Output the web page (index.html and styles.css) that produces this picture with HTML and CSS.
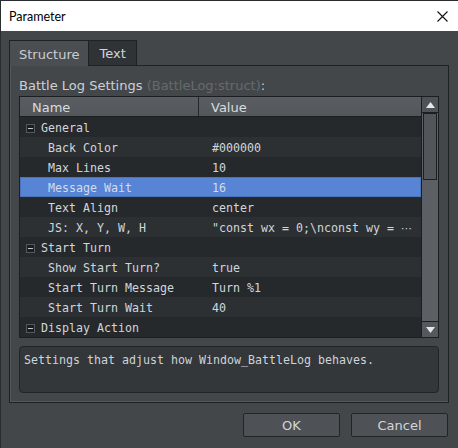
FILE: index.html
```html
<!DOCTYPE html>
<html>
<head>
<meta charset="utf-8">
<title>Parameter</title>
<link rel="stylesheet" href="styles.css">
</head>
<body>
<div class="window">
  <div class="titlebar">
    <span class="title">Parameter</span>
    <svg class="close" width="11" height="11" viewBox="0 0 11 11"><path d="M0.5 0.5L10.5 10.5M10.5 0.5L0.5 10.5" stroke="#111" stroke-width="1.1" fill="none"/></svg>
  </div>
  <div class="body">
    <div class="tabs">
      <div class="tab active">Structure</div>
      <div class="tab">Text</div>
    </div>
    <div class="pane">
      <div class="label">Battle Log Settings <span class="type">(BattleLog:struct)</span>:</div>
      <div class="tree">
        <div class="tree-main">
          <div class="header">
            <div class="head-name">Name</div>
            <div class="head-value">Value</div>
          </div>
          <div class="row group"><div class="name"><span class="toggle"></span>General</div><div class="value"></div></div>
          <div class="row alt"><div class="name">Back Color</div><div class="value">#000000</div></div>
          <div class="row"><div class="name">Max Lines</div><div class="value">10</div></div>
          <div class="row selected"><div class="name">Message Wait</div><div class="value">16</div></div>
          <div class="row"><div class="name">Text Align</div><div class="value">center</div></div>
          <div class="row alt"><div class="name">JS: X, Y, W, H</div><div class="value">"const wx = 0;\nconst wy = <span class="elide">⋯</span></div></div>
          <div class="row group"><div class="name"><span class="toggle"></span>Start Turn</div><div class="value"></div></div>
          <div class="row alt"><div class="name">Show Start Turn?</div><div class="value">true</div></div>
          <div class="row"><div class="name">Start Turn Message</div><div class="value">Turn %1</div></div>
          <div class="row alt"><div class="name">Start Turn Wait</div><div class="value">40</div></div>
          <div class="row group"><div class="name"><span class="toggle"></span>Display Action</div><div class="value"></div></div>
        </div>
        <div class="scrollbar">
          <div class="arrow up"><svg width="9" height="6" viewBox="0 0 9 6"><path d="M4.5 0L9 6H0Z" fill="#e4e8ec"/></svg></div>
          <div class="track"><div class="thumb"></div></div>
          <div class="arrow down"><svg width="9" height="6" viewBox="0 0 9 6"><path d="M0 0H9L4.5 6Z" fill="#e4e8ec"/></svg></div>
        </div>
      </div>
      <div class="desc">Settings that adjust how Window_BattleLog behaves.</div>
    </div>
    <div class="buttons">
      <button class="btn">OK</button>
      <button class="btn">Cancel</button>
    </div>
  </div>
</div>
</body>
</html>
```

FILE: styles.css
```css
* { box-sizing: border-box; }

html, body {
  margin: 0;
  padding: 0;
  background: #43474a;
}

.window {
  width: 458px;
  height: 448px;
  background: #43474a;
  border-top: 1px solid #2a2d30;
  border-left: 1px solid #2a2d30;
  font-family: "DejaVu Sans", sans-serif;
  font-size: 13px;
  color: #c9cdd1;
  overflow: hidden;
}

/* title bar */
.titlebar {
  height: 30px;
  background: #ffffff;
  display: flex;
  align-items: center;
  justify-content: space-between;
  padding: 0 10px 0 8px;
}

.title {
  font-family: "Lato", "Liberation Sans", sans-serif;
  font-size: 12.5px;
  color: #000;
}

.close { display: block; }

/* dialog body */
.body {
  padding: 9px 9px 0 8px;
}

.tabs {
  display: flex;
  height: 25px;
}

.tab {
  height: 25px;
  padding: 1px 10px 0;
  display: flex;
  align-items: center;
  border: 1px solid #1f2225;
  border-bottom: none;
  background: #2f3336;
  color: #d2d6da;
}

.tab.active {
  padding: 1px 9px 0;
  background: #4a4e52;
  color: #c8ccd0;
  position: relative;
  z-index: 1;
  height: 26px;
  margin-bottom: -1px;
}

.tab + .tab { border-left: none; }

.pane {
  width: 440px;
  border: 1px solid #1f2225;
  box-shadow: inset 1px 0 0 #54585c, inset 0 -1px 0 #54585c;
  padding: 12px 9px 9px 9px;
}

.label {
  height: 18px;
  line-height: 16px;
  color: #cdd1d5;
}

.label .type { color: #666a6e; }

/* tree view */
.tree {
  display: flex;
  height: 242px;
  border: 1px solid #1c1f22;
  background: #26292c;
  font-family: "DejaVu Sans Mono", monospace;
  font-size: 11.63px;
  color: #d0d6dc;
}

.tree-main {
  flex: 1;
  min-width: 0;
}

.header {
  display: flex;
  height: 20px;
  background: linear-gradient(#5a5e62, #53575b);
  border-bottom: 1px solid #1c1f22;
  font-family: "DejaVu Sans", sans-serif;
  font-size: 13px;
  color: #d8dcdf;
  line-height: 21px;
}

.head-name {
  width: 179px;
  padding-left: 12px;
  border-right: 1px solid #25282b;
}

.head-value { padding-left: 12px; }

.row {
  display: flex;
  height: 20px;
  padding-top: 1px;
  line-height: 20px;
  background: #26292c;
  white-space: nowrap;
}

.row.alt { background: #2d3033; }

.row.selected {
  background: #5784d4;
  box-shadow: inset 0 0 0 1px #4a74bc;
  color: #d2dcec;
}

.name {
  width: 179px;
  padding-left: 28px;
}

.group .name { padding-left: 6px; }

.value {
  flex: 1;
  min-width: 0;
  padding-left: 13px;
  overflow: hidden;
}

.elide {
  font-family: "DejaVu Sans", sans-serif;
  font-size: 11px;
}

.toggle {
  display: inline-block;
  vertical-align: -1px;
  width: 9px;
  height: 9px;
  margin-right: 6px;
  border: 1px solid #55595d;
  background: #1c1f22;
  position: relative;
}

.toggle::after {
  content: "";
  position: absolute;
  left: 1px;
  right: 1px;
  top: 3px;
  height: 1px;
  background: #c4c8cc;
}

/* scrollbar */
.scrollbar {
  width: 17px;
  display: flex;
  flex-direction: column;
  border-left: 1px solid #1c1f22;
  background: #5c6064;
}

.arrow {
  height: 16px;
  display: flex;
  align-items: center;
  justify-content: center;
  background: #4f5357;
}

.arrow.up { border-bottom: 1px solid #1c1f22; }
.arrow.down { border-top: 1px solid #1c1f22; background: #55595d; }

.track {
  flex: 1;
  padding: 0 1px;
}

.thumb {
  height: 67px;
  border: 1px solid #1c1f22;
  background: #52565a;
}

/* description box */
.desc {
  margin-top: 8px;
  height: 47px;
  border: 1px solid #222528;
  border-radius: 4px;
  background: #33373a;
  padding: 5px 4px;
  font-family: "DejaVu Sans Mono", monospace;
  font-size: 11.63px;
  line-height: 16px;
  color: #cdd3d9;
}

/* dialog buttons */
.buttons {
  display: flex;
  justify-content: flex-end;
  gap: 11px;
  padding-top: 10px;
  padding-right: 1px;
}

.btn {
  width: 97px;
  height: 24px;
  border: 1px solid #222528;
  border-radius: 2px;
  background: #4e5256;
  color: #d2d6da;
  font-family: "DejaVu Sans", sans-serif;
  font-size: 13px;
  padding: 0;
}
```
